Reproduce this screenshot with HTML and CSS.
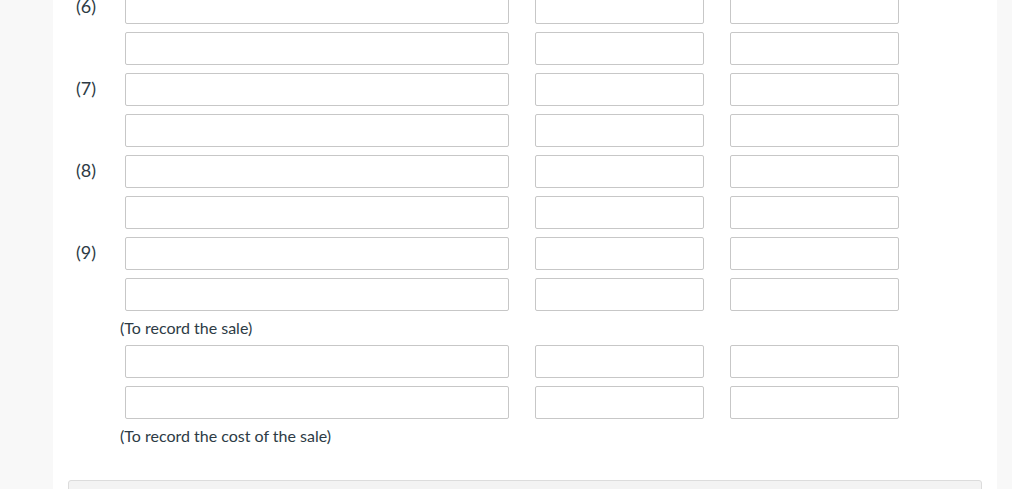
FILE: index.html
```html
<!DOCTYPE html>
<html>
<head>
<meta charset="utf-8">
<link rel="stylesheet" href="styles.css">
</head>
<body>
<div class="panel">
  <div class="entries">
    <div class="row"><div class="label">(6)</div><div class="box wide"></div><div class="box"></div><div class="box"></div></div>
    <div class="row"><div class="label"></div><div class="box wide"></div><div class="box"></div><div class="box"></div></div>
    <div class="row"><div class="label">(7)</div><div class="box wide"></div><div class="box"></div><div class="box"></div></div>
    <div class="row"><div class="label"></div><div class="box wide"></div><div class="box"></div><div class="box"></div></div>
    <div class="row"><div class="label">(8)</div><div class="box wide"></div><div class="box"></div><div class="box"></div></div>
    <div class="row"><div class="label"></div><div class="box wide"></div><div class="box"></div><div class="box"></div></div>
    <div class="row"><div class="label">(9)</div><div class="box wide"></div><div class="box"></div><div class="box"></div></div>
    <div class="row"><div class="label"></div><div class="box wide"></div><div class="box"></div><div class="box"></div></div>
    <div class="memo">(To record the sale)</div>
    <div class="row"><div class="label"></div><div class="box wide"></div><div class="box"></div><div class="box"></div></div>
    <div class="row"><div class="label"></div><div class="box wide"></div><div class="box"></div><div class="box"></div></div>
    <div class="memo">(To record the cost of the sale)</div>
  </div>
  <div class="footer-bar"></div>
</div>
</body>
</html>
```
FILE: styles.css
```css
html, body {
  margin: 0;
  padding: 0;
  background: #f8f8f8;
  font-family: Lato, "Liberation Sans", sans-serif;
  color: #2d3b45;
}
.panel {
  margin-left: 53px;
  width: 944px;
  height: 489px;
  background: #fff;
  overflow: hidden;
}
.entries {
  margin-top: -9px;
  display: flex;
  flex-direction: column;
}
.row {
  display: flex;
  align-items: center;
  gap: 26px;
  height: 33px;
  margin-bottom: 8px;
}
.label {
  flex: none;
  width: 49px;
  padding-left: 23px;
  padding-bottom: 3px;
  margin-right: -26px;
  font-size: 18px;
  line-height: 22px;
}
.box {
  flex: none;
  box-sizing: border-box;
  width: 169px;
  height: 33px;
  border: 1px solid #c7c7c7;
  border-radius: 2px;
  background: #fff;
}
.box.wide {
  width: 384px;
}
.memo {
  margin: -2px 0 0 67px;
  padding-top: 1px;
  box-sizing: border-box;
  font-size: 16px;
  line-height: 20px;
  height: 28px;
}
.footer-bar {
  margin: 27px 0 0 15px;
  width: 914px;
  height: 20px;
  box-sizing: border-box;
  background: #f3f3f3;
  border: 1px solid #dcdcdc;
  border-radius: 3px 3px 0 0;
}
```
